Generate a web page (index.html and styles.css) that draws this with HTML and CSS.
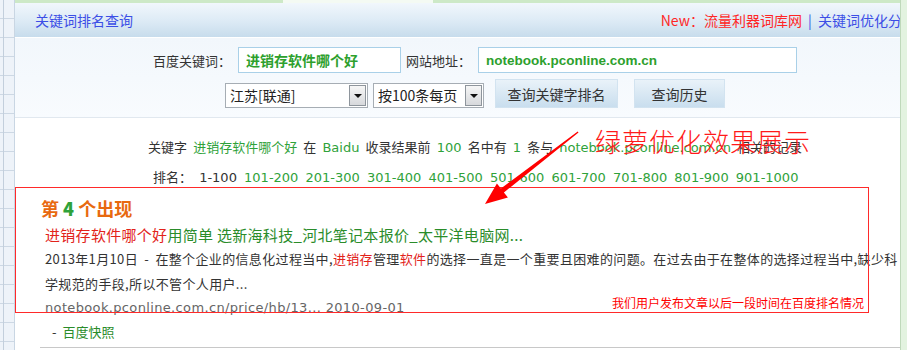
FILE: index.html
```html
<!DOCTYPE html>
<html lang="zh-CN">
<head>
  <meta charset="UTF-8" />
  <title>关键词排名查询</title>
  <link rel="stylesheet" href="styles.css">
</head>
<body>

  <div class="page">
    <div class="gutter"></div>

    <div class="main">
      <div class="top-strip"><span class="tab"></span></div>

      <div class="header">
        <span class="title">关键词排名查询</span>
        <span class="links">
          <span class="new">New：</span><a class="red">流量利器词库网</a>
          <span class="sep">|</span>
          <a class="blue">关键词优化分析</a>
        </span>
      </div>

      <div class="search">
        <div class="row">
          <label>百度关键词：</label>
          <div class="field kw">进销存软件哪个好</div>
          <label class="site-label">网站地址：</label>
          <div class="field site">notebook.pconline.com.cn</div>
        </div>
        <div class="row row2">
          <div class="select area">江苏[联通]<span class="arrow"></span></div>
          <div class="select per">按100条每页<span class="arrow"></span></div>
          <button class="btn btn-rank">查询关键字排名</button>
          <button class="btn btn-history">查询历史</button>
        </div>
      </div>

      <div class="summary">
        关键字 <em>进销存软件哪个好</em> 在 <em>Baidu</em> 收录结果前 <em>100</em> 名中有 <em>1</em> 条与 <em>notebook.pconline.com.cn</em> 相关的记录
      </div>

      <div class="pages">
        排名：&nbsp;<span class="cur">1-100</span>
        <a>101-200</a> <a>201-300</a> <a>301-400</a> <a>401-500</a> <a>501-600</a>
        <a>601-700</a> <a>701-800</a> <a>801-900</a> <a>901-1000</a>
      </div>

      <div class="result">
        <div class="pos">第 <b>4</b> 个出现</div>
        <div class="r-title"><span class="hl">进销存软件哪个好</span>用简单 选新海科技_河北笔记本报价_太平洋电脑网...</div>
        <div class="r-desc">2013年1月10日 - 在整个企业的信息化过程当中,<span class="hl">进销存</span>管理<span class="hl">软件</span>的选择一直是一个重要且困难的问题。在过去由于在整体的选择过程当中,缺少科学规范的手段,所以不管个人用户...</div>
        <div class="r-url">notebook.pconline.com.cn/price/hb/13... 2010-09-01</div>
        <div class="r-cache">- <a>百度快照</a></div>
      </div>
      <div class="bottom-line"></div>
    </div>

    <div class="right-strip"></div>

    <!-- annotations drawn over the screenshot -->
    <div class="mark-box"></div>
    <div class="mark-title">绿萝优化效果展示</div>
    <div class="mark-note">我们用户发布文章以后一段时间在百度排名情况</div>
    <svg class="mark-arrow" width="907" height="350" viewBox="0 0 907 350">
      <polygon points="577.7,131.4 578.5,132.6 503.9,192.5 507.9,197.6 485,204 496.9,183.4 500.9,188.5" fill="#ff0000"/>
    </svg>
  </div>

</body>
</html>
```

FILE: styles.css
```css
body {
  margin: 0;
  font-family: "DejaVu Sans", "Noto Sans CJK SC", sans-serif;
  color: #333;
  background: #fff;
}

.page {
  position: relative;
  width: 907px;
  height: 350px;
  display: flex;
  overflow: hidden;
}

.gutter {
  width: 14px;
  flex: none;
  border-right: 1px solid #c9d6e3;
  background:
    linear-gradient(90deg, transparent 3px, #c3cfdc 3px, #c3cfdc 4px, transparent 4px),
    repeating-linear-gradient(180deg, #eef3f9 0, #eef3f9 18px, #cdd8e4 18px, #cdd8e4 19px);
}

.main {
  width: 885px;
  flex: none;
  overflow: hidden;
  background: #fff;
}

.right-strip {
  flex: 1;
  border-left: 1px solid #bfd9bb;
  background: #e3f3e0;
}

.top-strip {
  height: 3px;
  background: #cde9c7;
}

.top-strip .tab {
  display: block;
  margin-left: 268px;
  width: 150px;
  height: 3px;
  background: #f4faf3;
}

/* header bar */
.header {
  height: 34px;
  border-bottom: 1px solid #fff;
  background: linear-gradient(180deg, #f1f7fc 0%, #dceaf5 55%, #c7dcec 100%);
  display: flex;
  align-items: center;
  justify-content: space-between;
  padding-left: 20px;
  font-size: 14px;
  font-family: "Noto Sans CJK SC", sans-serif;
  white-space: nowrap;
}

.header .title {
  color: #3c4ee6;
}

.header .links {
  margin-right: -16px;
}

.header .new,
.header .red {
  color: #ff2626;
}

.header .sep {
  color: #3c4ee6;
  margin: 0 3px;
}

.header .blue {
  color: #3c4ee6;
}

/* search form */
.search {
  background: linear-gradient(180deg, #f2f7fc, #f8fbfe);
  padding: 9px 0;
  border-bottom: 1px solid #e1e8ef;
}

.row {
  display: flex;
  align-items: center;
  padding-left: 138px;
  height: 26px;
}

.row label {
  font-family: "Noto Sans CJK SC", sans-serif;
  font-size: 13px;
  color: #333;
  margin-right: 7px;
}

.row .site-label {
  margin-left: 5px;
}

.field {
  height: 24px;
  border: 1px solid #a9d0e8;
  background: #fff;
  display: flex;
  align-items: center;
  padding-left: 7px;
  color: #2da02d;
  font-weight: bold;
}

.field.kw {
  width: 154px;
  font-family: "Noto Sans CJK SC", sans-serif;
  font-size: 14px;
}

.field.site {
  width: 310px;
  font-family: "Liberation Sans", "Noto Sans CJK SC", sans-serif;
  font-size: 13.5px;
}

.row2 {
  margin-top: 6px;
  height: 29px;
  align-items: flex-end;
  padding-left: 210px;
}

.select {
  position: relative;
  height: 23px;
  border: 1px solid #a6adb4;
  background: #fff;
  font-family: "Noto Sans CJK SC", sans-serif;
  font-size: 14px;
  line-height: 23px;
  padding-left: 4px;
  color: #222;
}

.select.area {
  width: 137px;
}

.select.per {
  width: 105px;
  margin-left: 5px;
}

.select .arrow {
  position: absolute;
  right: 1px;
  top: 1px;
  width: 15px;
  height: 19px;
  border: 1px solid #8e959c;
  background: linear-gradient(180deg, #f6f6f6, #d7d9dc);
}

.select .arrow::after {
  content: "";
  position: absolute;
  left: 4px;
  top: 8px;
  border-left: 4px solid transparent;
  border-right: 4px solid transparent;
  border-top: 4px solid #111;
}

.btn {
  height: 29px;
  border: 1px solid #d2e3f0;
  background: linear-gradient(180deg, #e9f2f9, #c9deee);
  font-family: "Noto Sans CJK SC", sans-serif;
  font-size: 14px;
  color: #333;
  padding: 0;
}

.btn-rank {
  width: 123px;
  margin-left: 11px;
}

.btn-history {
  width: 91px;
  margin-left: 16px;
}

/* summary */
.summary {
  margin-top: 15px;
  padding-left: 133px;
  line-height: 30px;
  font-size: 13px;
  word-spacing: 2px;
  white-space: nowrap;
}

.summary em,
.pages a {
  font-style: normal;
  color: #2fa23a;
}

.pages {
  padding-left: 138px;
  line-height: 30px;
  font-size: 13px;
  word-spacing: 3px;
  white-space: nowrap;
}

.pages .cur {
  color: #333;
}

/* result item */
.result {
  padding-left: 26px;
  font-family: "Noto Sans CJK SC", sans-serif;
}

.pos {
  line-height: 30px;
  font-size: 18px;
  font-weight: bold;
  color: #e8690f;
}

.pos b {
  color: #2fa23a;
}

.r-title {
  padding-left: 4px;
  line-height: 23px;
  font-size: 15px;
  letter-spacing: 0.3px;
  color: #2a8c2a;
  white-space: nowrap;
}

.hl {
  color: #e2231a;
}

.r-desc {
  padding-left: 4px;
  width: 858px;
  line-height: 25px;
  font-size: 13px;
  letter-spacing: 0.35px;
  word-spacing: 3px;
  color: #333;
}

.r-url {
  padding-left: 4px;
  line-height: 24px;
  font-size: 13px;
  letter-spacing: 0.35px;
  font-family: "DejaVu Sans", sans-serif;
  color: #666;
}

.r-cache {
  padding-left: 11px;
  line-height: 24px;
  font-size: 13px;
  word-spacing: 3px;
  color: #333;
}

.r-cache a {
  color: #2a8c2a;
}

.bottom-line {
  margin: 3px 0 0 25px;
  border-top: 1px solid #c8c8c8;
}

/* annotations */
.mark-box {
  position: absolute;
  left: 15px;
  top: 187px;
  width: 852px;
  height: 124px;
  border: 1px solid #ff2a2a;
}

.mark-title {
  position: absolute;
  left: 595px;
  top: 124px;
  font-family: "Noto Sans CJK SC", sans-serif;
  font-size: 26px;
  font-weight: 300;
  letter-spacing: 1px;
  color: #ff1a1a;
  line-height: 34px;
}

.mark-note {
  position: absolute;
  left: 612px;
  top: 295px;
  font-family: "Noto Sans CJK SC", sans-serif;
  font-size: 12px;
  color: #ff0000;
  line-height: 16px;
}

.mark-arrow {
  position: absolute;
  left: 0;
  top: 0;
}
```
